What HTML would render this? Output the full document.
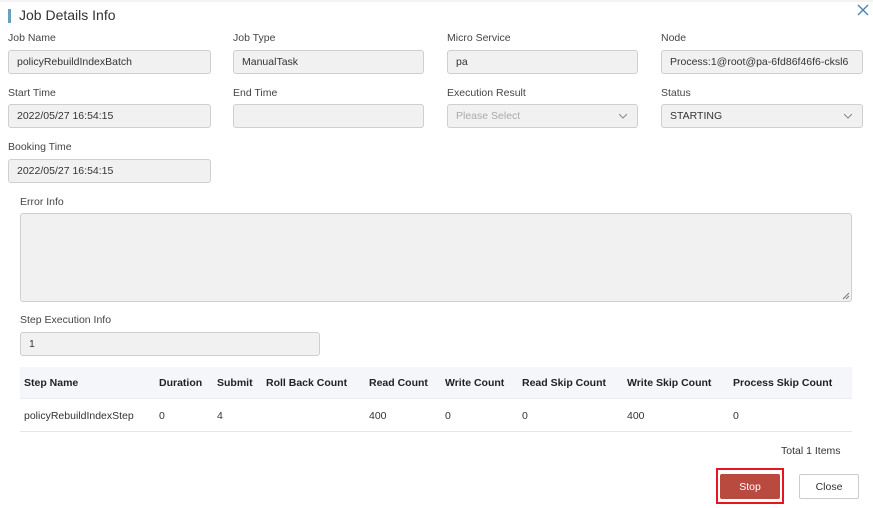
<!DOCTYPE html>
<html><head><style>
*{box-sizing:border-box;margin:0;padding:0}
body{width:873px;height:508px;background:#fff;font-family:"Liberation Sans",Arial,sans-serif;font-size:10.5px;color:#333;position:relative;overflow:hidden}
.a{position:absolute;white-space:nowrap}
.lbl{position:absolute;color:#444;font-size:10.5px}
.in{position:absolute;height:24px;background:#f1f1f1;border:1px solid #cfcfcf;border-radius:3px;padding-left:8px;line-height:23px;color:#333;font-size:10.5px;white-space:nowrap;overflow:hidden}
.chev{position:absolute;right:10px;top:7px;width:8px;height:8px}
.th{position:absolute;top:377px;font-weight:bold;color:#222;font-size:10.5px}
.td{position:absolute;top:410px;color:#333;font-size:10.5px}
</style></head><body>
<div class="a" style="left:0;top:0;width:873px;height:2px;background:#f3f3f3"></div>
<div class="a" style="left:8px;top:9px;width:3px;height:14px;background:#6a9fc0"></div>
<div class="a" style="left:19px;top:7px;font-size:14px;color:#333">Job Details Info</div>
<svg class="a" style="left:857px;top:4px" width="12" height="12" viewBox="0 0 12 12"><path d="M1 1L11 11M11 1L1 11" stroke="#4a7fb0" stroke-width="1.3"/></svg>

<div class="lbl" style="left:8px;top:32px">Job Name</div>
<div class="lbl" style="left:233px;top:32px">Job Type</div>
<div class="lbl" style="left:447px;top:32px">Micro Service</div>
<div class="lbl" style="left:661px;top:32px">Node</div>
<div class="in" style="left:8px;top:50px;width:203px">policyRebuildIndexBatch</div>
<div class="in" style="left:233px;top:50px;width:191px">ManualTask</div>
<div class="in" style="left:447px;top:50px;width:191px">pa</div>
<div class="in" style="left:661px;top:50px;width:202px">Process:1@root@pa-6fd86f46f6-cksl6</div>

<div class="lbl" style="left:8px;top:87px">Start Time</div>
<div class="lbl" style="left:233px;top:87px">End Time</div>
<div class="lbl" style="left:447px;top:87px">Execution Result</div>
<div class="lbl" style="left:661px;top:87px">Status</div>
<div class="in" style="left:8px;top:104px;width:203px">2022/05/27 16:54:15</div>
<div class="in" style="left:233px;top:104px;width:191px"></div>
<div class="in" style="left:447px;top:104px;width:191px;color:#aaa">Please Select<svg class="chev" viewBox="0 0 8 8"><path d="M0 2L4 6L8 2" fill="none" stroke="#888" stroke-width="1"/></svg></div>
<div class="in" style="left:661px;top:104px;width:202px">STARTING<svg class="chev" viewBox="0 0 8 8"><path d="M0 2L4 6L8 2" fill="none" stroke="#888" stroke-width="1"/></svg></div>

<div class="lbl" style="left:8px;top:141px">Booking Time</div>
<div class="in" style="left:8px;top:159px;width:203px">2022/05/27 16:54:15</div>

<div class="lbl" style="left:20px;top:196px">Error Info</div>
<div class="in" style="left:20px;top:213px;width:832px;height:89px"><svg style="position:absolute;right:1px;bottom:1px" width="8" height="8"><path d="M7 1L1 7M7 4L4 7" stroke="#777" stroke-width="1"/></svg></div>

<div class="lbl" style="left:20px;top:314px">Step Execution Info</div>
<div class="in" style="left:20px;top:332px;width:300px">1</div>

<div class="a" style="left:20px;top:367px;width:832px;height:32px;background:#f5f6f9;border-bottom:1px solid #eceef2"></div>
<div class="a" style="left:20px;top:431px;width:832px;height:1px;background:#e6e6e6"></div>
<div class="th" style="left:24px">Step Name</div>
<div class="th" style="left:159px">Duration</div>
<div class="th" style="left:217px">Submit</div>
<div class="th" style="left:266px">Roll Back Count</div>
<div class="th" style="left:369px">Read Count</div>
<div class="th" style="left:445px">Write Count</div>
<div class="th" style="left:522px">Read Skip Count</div>
<div class="th" style="left:627px">Write Skip Count</div>
<div class="th" style="left:733px">Process Skip Count</div>
<div class="td" style="left:24px">policyRebuildIndexStep</div>
<div class="td" style="left:159px">0</div>
<div class="td" style="left:217px">4</div>
<div class="td" style="left:369px">400</div>
<div class="td" style="left:445px">0</div>
<div class="td" style="left:522px">0</div>
<div class="td" style="left:627px">400</div>
<div class="td" style="left:733px">0</div>

<div class="a" style="left:781px;top:445px;color:#333">Total 1 Items</div>

<div class="a" style="left:716px;top:468px;width:68px;height:36px;border:2px solid #e8141e"></div>
<div class="a" style="left:720px;top:474px;width:60px;height:25px;background:#b94a40;border-radius:2px;color:#fff;text-align:center;line-height:26px">Stop</div>
<div class="a" style="left:799px;top:474px;width:60px;height:25px;border:1px solid #ccc;border-radius:2px;background:#fff;text-align:center;line-height:24px;color:#333">Close</div>
</body></html>
